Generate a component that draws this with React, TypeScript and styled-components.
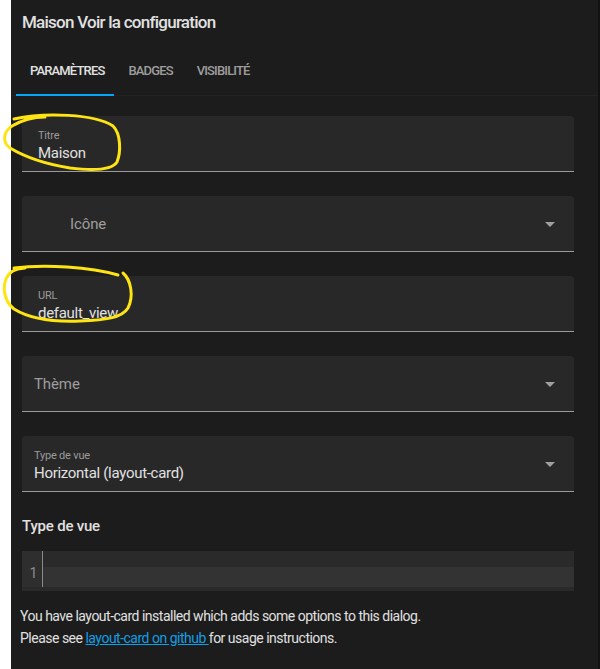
import styled, { createGlobalStyle } from "styled-components"

const tabs = [
    {id: 0, title: 'Paramètres', active: true},
    {id: 1, title: 'Badges', active: false},
    {id: 2, title: 'Visibilité', active: false},
]

const fields = [
    {id: 0, label: 'Titre', value: 'Maison', select: false, icon: false},
    {id: 1, label: 'Icône', value: '', select: true, icon: true},
    {id: 2, label: 'URL', value: 'default_view', select: false, icon: false},
    {id: 3, label: 'Thème', value: '', select: true, icon: false},
    {id: 4, label: 'Type de vue', value: 'Horizontal (layout-card)', select: true, icon: false},
]

const App = () => {
    return(
        <Page>
            <GlobalStyle />
            <Gutter />
            <Dialog>
                <Title>Maison Voir la configuration</Title>
                <TabBar>
                    {tabs.map(({id, title, active}) => (
                        <Tab key={id} $active={active}>{title}</Tab>
                    ))}
                </TabBar>
                <Content>
                    {fields.map(({id, label, value, select, icon}) => (
                        <Field key={id} $select={select} $icon={icon}>
                            {value ? (
                                <>
                                    <FloatLabel>{label}</FloatLabel>
                                    <Value>{value}</Value>
                                </>
                            ) : (
                                <Placeholder>{label}</Placeholder>
                            )}
                            {select && <Arrow />}
                        </Field>
                    ))}
                    <Heading>Type de vue</Heading>
                    <Editor>
                        <LineNumbers><span>1</span></LineNumbers>
                        <Lines>
                            <ActiveLine />
                        </Lines>
                    </Editor>
                    <Note>
                        You have layout-card installed which adds some options to this dialog.<br />
                        Please see <a href="#">layout-card on github </a>for usage instructions.
                    </Note>
                </Content>
            </Dialog>
            <Backdrop />
            <Marks viewBox="0 0 600 669">
                <path d="M14 119 C45 112, 95 114, 113 126 C121 134, 121 152, 117 162 C112 170, 95 171, 70 168 C45 164, 25 157, 10 148 C2 142, 3 132, 12 126 C22 120, 35 117, 45 117" />
                <path d="M14 268 C45 264, 90 267, 118 275 M123 273 C131 280, 134 296, 128 308 C122 318, 105 320, 80 321 C55 322, 30 319, 14 309 C3 300, 3 287, 6 279 C9 272, 14 269, 25 268" />
            </Marks>
        </Page>
    )
}
export default App


const GlobalStyle = createGlobalStyle`
    body {
        margin: 0;
        background: #ffffff;
        font-family: Roboto, "Noto Sans", sans-serif;
    }
`

const Page = styled.div`
    position: relative;
    display: flex;
    width: 600px;
    height: 669px;
    overflow: hidden;
`

const Gutter = styled.div`
    width: 11px;
    background: #ffffff;
`

const Backdrop = styled.div`
    width: 2px;
    background: #121212;
`

const Dialog = styled.div`
    flex: 1;
    display: flex;
    flex-direction: column;
    background: #1c1c1c;
    color: #e1e1e1;
`

const Title = styled.h2`
    margin: 0;
    padding: 10px 0 0 11px;
    height: 37px;
    font-size: 17px;
    font-weight: 500;
    letter-spacing: -0.75px;
    line-height: 24px;
    color: #e1e1e1;
`

const TabBar = styled.div`
    display: flex;
    padding-left: 5px;
    height: 48px;
    border-bottom: 1px solid #222;
`

const Tab = styled.div<{ $active: boolean }>`
    display: flex;
    align-items: center;
    padding: 0 10px 0 14px;
    font-size: 13px;
    font-weight: 500;
    letter-spacing: -0.85px;
    text-transform: uppercase;
    color: ${({ $active }) => ($active ? "#e1e1e1" : "#9e9e9e")};
    border-bottom: 2px solid ${({ $active }) => ($active ? "#03a9f4" : "transparent")};
    margin-bottom: -1px;
`

const Content = styled.div`
    display: flex;
    flex-direction: column;
    padding: 20px 24px 0 11px;
`

const Field = styled.div<{ $select: boolean, $icon: boolean }>`
    position: relative;
    display: flex;
    flex-direction: column;
    justify-content: center;
    height: 55px;
    margin-bottom: 24px;
    padding: 0 ${({ $select }) => ($select ? "12px" : "16px")};
    padding-left: ${({ $select, $icon }) => ($icon ? "48px" : $select ? "12px" : "16px")};
    background: #282828;
    border-radius: 4px 4px 0 0;
    border-bottom: 1px solid #9a9a9a;
`

const FloatLabel = styled.span`
    font-size: 11px;
    letter-spacing: -0.2px;
    line-height: 14px;
    color: #9b9b9b;
    margin-top: 4px;
`

const Value = styled.span`
    font-size: 15px;
    letter-spacing: -0.3px;
    line-height: 20px;
    color: #e1e1e1;
`

const Placeholder = styled.span`
    font-size: 15px;
    letter-spacing: -0.1px;
    line-height: 20px;
    color: #9e9e9e;
`

const Arrow = styled.span`
    position: absolute;
    right: 19px;
    top: 26px;
    width: 0;
    height: 0;
    border-left: 5px solid transparent;
    border-right: 5px solid transparent;
    border-top: 5px solid #a0a0a0;
`

const Heading = styled.div`
    margin: -2px 0 13px;
    font-size: 15px;
    font-weight: 500;
    letter-spacing: -0.2px;
    line-height: 24px;
    color: #e1e1e1;
`

const Editor = styled.div`
    display: flex;
    height: 40px;
    background: #2a2a2a;
`

const LineNumbers = styled.div`
    display: flex;
    align-items: flex-end;
    justify-content: center;
    width: 21px;
    padding: 0 0 6px 3px;
    box-sizing: border-box;
    background: #2e2e2e;
    border-right: 1px solid #8a8a8a;
    margin-bottom: 4px;
    font-size: 14px;
    line-height: 16px;
    color: #8c8c8c;
`

const Lines = styled.div`
    flex: 1;
    display: flex;
    flex-direction: column;
    justify-content: flex-end;
    padding-bottom: 4px;
`

const ActiveLine = styled.div`
    height: 20px;
    background: #333333;
`

const Note = styled.p`
    margin: 14px 0 0 -2px;
    font-size: 14px;
    letter-spacing: -0.5px;
    line-height: 22px;
    color: #e1e1e1;
    a {
        color: #0f9fe6;
        text-decoration: underline;
    }
`

const Marks = styled.svg`
    position: absolute;
    inset: 0;
    width: 600px;
    height: 669px;
    pointer-events: none;
    fill: none;
    stroke: #ffe414;
    stroke-width: 3;
    stroke-linecap: round;
    stroke-linejoin: round;
`
